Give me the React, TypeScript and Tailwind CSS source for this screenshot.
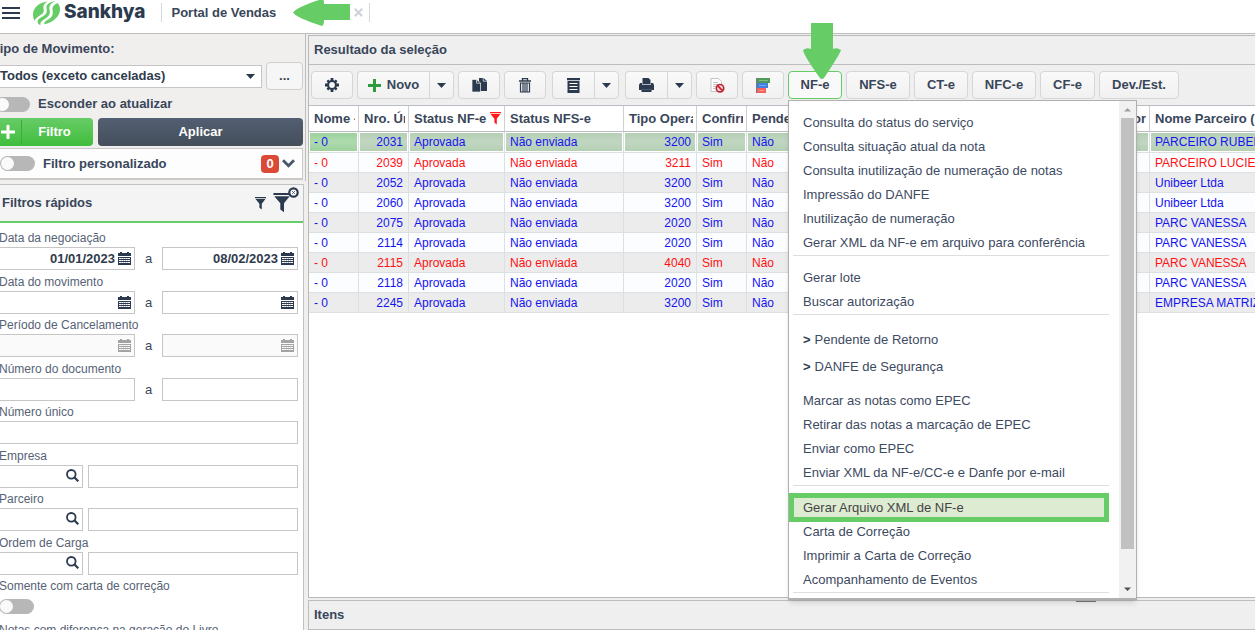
import React from "react";

const rows = [
  { n: "2031", op: "3200", p: "PARCEIRO RUBENS", sel: true },
  { n: "2039", op: "3211", p: "PARCEIRO LUCIENE", red: true },
  { n: "2052", op: "3200", p: "Unibeer Ltda" },
  { n: "2060", op: "3200", p: "Unibeer Ltda" },
  { n: "2075", op: "2020", p: "PARC VANESSA" },
  { n: "2114", op: "2020", p: "PARC VANESSA" },
  { n: "2115", op: "4040", p: "PARC VANESSA", red: true },
  { n: "2118", op: "2020", p: "PARC VANESSA" },
  { n: "2245", op: "3200", p: "EMPRESA MATRIZ" },
];

const menuGroups = [
  [
    "Consulta do status do serviço",
    "Consulta situação atual da nota",
    "Consulta inutilização de numeração de notas",
    "Impressão do DANFE",
    "Inutilização de numeração",
    "Gerar XML da NF-e em arquivo para conferência",
  ],
  ["Gerar lote", "Buscar autorização"],
];
const epecItems = [
  "Marcar as notas como EPEC",
  "Retirar das notas a marcação de EPEC",
  "Enviar como EPEC",
  "Enviar XML da NF-e/CC-e e Danfe por e-mail",
];
const eventItems = ["Carta de Correção", "Imprimir a Carta de Correção", "Acompanhamento de Eventos"];

const field = "block h-[23px] border border-[#c6c6c6] bg-white text-[#2f3b4d] outline-none";

function Caret({ className = "" }: { className?: string }) {
  return (
    <svg className={className} width="9" height="5" viewBox="0 0 9 5" aria-hidden="true">
      <path d="M0 0h9L4.5 5z" fill="#2b3a4e" />
    </svg>
  );
}

function CalendarIcon({ color }: { color: string }) {
  return (
    <svg width="13" height="13" viewBox="0 0 13 13" aria-hidden="true">
      <path d="M0 1h2V0h2v1h5V0h2v1h2v3H0zM0 5h13v8H0z" fill={color} />
      <path d="M1 6.500h11M1 8.500h11M1 10.500h11" stroke="#fff" strokeWidth="1" strokeDasharray="2 .25" />
    </svg>
  );
}

function SearchIcon() {
  return (
    <svg width="13" height="13" viewBox="0 0 13 13" fill="none" stroke="#2b3a4e" aria-hidden="true">
      <circle cx="5.300" cy="5.300" r="4.300" strokeWidth="1.800" />
      <path d="M8.300 8.300l4 4" strokeWidth="2.200" />
    </svg>
  );
}

function Funnel({ size, color }: { size: number; color: string }) {
  return (
    <svg width={size} height={size + 2} viewBox="0 0 12 14" aria-hidden="true">
      <path d="M0 0h12v1.400H0zM.6 2.200h10.800L7.400 7.200V13.500L4.800 11.500V7.200z" fill={color} />
    </svg>
  );
}

function Toggle({ id }: { id: string }) {
  return (
    <input
      id={id}
      type="checkbox"
      role="switch"
      className="relative h-[15px] w-[35px] shrink-0 appearance-none rounded-full bg-[#b7b7b7] before:absolute before:left-px before:top-px before:h-[13px] before:w-[13px] before:rounded-full before:bg-[#fafafa]"
    />
  );
}

function DateField({ label, value, disabled }: { label: string; value?: string; disabled?: boolean }) {
  return (
    <div className="relative min-w-0 flex-1">
      <input
        aria-label={label}
        defaultValue={value}
        disabled={disabled}
        className={`${field} w-full pr-[19px] text-right text-[13px] font-bold disabled:bg-[#fafafa]`}
      />
      <button aria-label={`Abrir calendário: ${label}`} disabled={disabled} className="absolute top-[5px] right-1">
        <CalendarIcon color={disabled ? "#a3a3a3" : "#2b3a4e"} />
      </button>
    </div>
  );
}

function FilterRow({ label, htmlFor, children }: { label: string; htmlFor?: string; children: React.ReactNode }) {
  return (
    <div className="shrink-0 odd:h-11 even:h-[43px]">
      <label htmlFor={htmlFor} className="block h-[17px] text-xs leading-4 whitespace-nowrap text-[#566275]">
        {label}
      </label>
      <div className="flex">{children}</div>
    </div>
  );
}

function Until() {
  return <span className="w-[27px] shrink-0 text-center text-[13px] leading-[23px] text-[#39465a]">a</span>;
}

function LookupRow({ label, id }: { label: string; id: string }) {
  return (
    <FilterRow label={label} htmlFor={id}>
      <div className="relative mr-[5px] w-[84px] shrink-0">
        <input id={id} className={`${field} w-full pr-5`} />
        <button aria-label={`Pesquisar ${label}`} className="absolute top-1 right-1">
          <SearchIcon />
        </button>
      </div>
      <input aria-label={`Descrição ${label}`} className={`${field} min-w-0 flex-1`} />
    </FilterRow>
  );
}

function Sidebar() {
  return (
    <aside className="flex w-[306px] shrink-0 flex-col overflow-hidden">
      <div className="border-r border-[#bdbdbd] pr-0.5">
        <div className="-ml-2">
          <label htmlFor="tipo" className="block pt-[7px] text-[13px] leading-4 font-bold">
            Tipo de Movimento:
          </label>
          <div className="mt-[5px] flex items-center gap-1">
            <div className="relative min-w-0 flex-1">
              <select id="tipo" className={`${field} w-full appearance-none pl-[7px] text-[13px] font-bold`}>
                <option>Todos (exceto canceladas)</option>
              </select>
              <Caret className="pointer-events-none absolute top-[9px] right-[7px]" />
            </div>
            <button className="h-7 w-[37px] rounded-sm border border-[#cfcfcf] bg-[#f6f6f6] text-[13px] leading-5 font-bold">
              ...
            </button>
          </div>
          <div className="flex h-7 items-center gap-2 pl-[3px]">
            <Toggle id="esconder" />
            <label htmlFor="esconder" className="text-[13px] font-bold">
              Esconder ao atualizar
            </label>
          </div>
          <div className="flex gap-[5px] text-[13px] font-bold text-white">
            <button className="flex h-7 w-[101px] items-center rounded-sm bg-gradient-to-b from-[#66cc66] to-[#3fbd3b]">
              <svg className="ml-[9px]" width="14" height="14" viewBox="0 0 14 14" aria-hidden="true">
                <path d="M5.500 0h3v5.500H14v3H8.500V14h-3V8.500H0v-3h5.500z" fill="#fff" />
              </svg>
              <span className="ml-1.5 h-6 flex-1 border-l border-[#40a840] pr-1.5 leading-6">Filtro</span>
            </button>
            <button className="h-7 flex-1 rounded-sm bg-gradient-to-b from-[#535f72] to-[#444e5b]">Aplicar</button>
          </div>
        </div>
        <div className="mt-0.5 mb-px flex h-8 items-center border border-b-2 border-l-0 border-[#c8c8c8] bg-[#fdfdfd] pr-[7px]">
          <Toggle id="personalizado" />
          <label htmlFor="personalizado" className="ml-2 flex-1 text-[13px] font-bold">
            Filtro personalizado
          </label>
          <span className="h-[18px] w-[18px] rounded bg-[#db4a36] text-center text-[13px] leading-[18px] font-bold text-white">
            0
          </span>
          <button aria-label="Expandir filtro personalizado" className="ml-[3px]">
            <svg width="13" height="9" viewBox="0 0 13 9" fill="none" aria-hidden="true">
              <path d="M1 1.200l5.500 5.500L12 1.200" stroke="#4a586b" strokeWidth="2.800" />
            </svg>
          </button>
        </div>
      </div>
      <div className="mt-[3px] mr-0.5 flex min-h-0 flex-1 flex-col border-t border-r border-[#c2c2c2] bg-white">
        <div className="flex h-[38px] shrink-0 items-center border-b-2 border-[#66cc66] bg-[#f4f4f4] pl-0.5">
          <h2 className="flex-1 text-[13px] font-bold">Filtros rápidos</h2>
          <button aria-label="Filtrar" className="mr-[7px]">
            <Funnel size={11} color="#2b3a4e" />
          </button>
          <button aria-label="Limpar filtros" className="relative mr-3">
            <Funnel size={18} color="#2b3a4e" />
            <svg className="absolute -top-1.5 left-[15px]" width="11" height="11" viewBox="0 0 11 11" aria-hidden="true">
              <circle cx="5.500" cy="5.500" r="4.200" fill="#fff" stroke="#2b3a4e" strokeWidth="2.200" />
              <path d="M4 4l3 3M7 4L4 7" stroke="#2b3a4e" strokeWidth=".7" />
            </svg>
          </button>
        </div>
        <div className="-ml-px flex min-h-0 flex-1 flex-col overflow-hidden pt-[7px] pr-[5px]">
          <FilterRow label="Data da negociação">
            <DateField label="Data da negociação inicial" value="01/01/2023" />
            <Until />
            <DateField label="Data da negociação final" value="08/02/2023" />
          </FilterRow>
          <FilterRow label="Data do movimento">
            <DateField label="Data do movimento inicial" />
            <Until />
            <DateField label="Data do movimento final" />
          </FilterRow>
          <FilterRow label="Período de Cancelamento">
            <DateField label="Cancelamento inicial" disabled />
            <Until />
            <DateField label="Cancelamento final" disabled />
          </FilterRow>
          <FilterRow label="Número do documento" htmlFor="doc">
            <input id="doc" className={`${field} min-w-0 flex-1`} />
            <Until />
            <input aria-label="Número do documento final" className={`${field} min-w-0 flex-1`} />
          </FilterRow>
          <FilterRow label="Número único" htmlFor="unico">
            <input id="unico" className={`${field} min-w-0 flex-1`} />
          </FilterRow>
          <LookupRow label="Empresa" id="empresa" />
          <LookupRow label="Parceiro" id="parceiro" />
          <LookupRow label="Ordem de Carga" id="ordem" />
          <FilterRow label="Somente com carta de correção" htmlFor="carta">
            <div className="flex pt-1">
              <Toggle id="carta" />
            </div>
          </FilterRow>
          <FilterRow label="Notas com diferença na geração do Livro" htmlFor="livro">
            <div className="flex pt-1">
              <Toggle id="livro" />
            </div>
          </FilterRow>
        </div>
      </div>
    </aside>
  );
}

const btn =
  "flex h-7 items-center justify-center rounded-sm border border-[#d6d6d6] bg-gradient-to-b from-[#f9f9f9] to-[#f1f1f1] text-[13px] font-bold";

function IconButton({ label, children }: { label: string; children: React.ReactNode }) {
  return (
    <button aria-label={label} className={`${btn} w-[42px]`}>
      {children}
    </button>
  );
}

function SplitButton({ label, wide, children }: { label: string; wide?: boolean; children: React.ReactNode }) {
  return (
    <div className="flex">
      <button aria-label={label} className={`${btn} rounded-r-none border-r-0 ${wide ? "w-[72px]" : "w-[42px]"}`}>
        {children}
      </button>
      <button aria-label={`Mais opções: ${label}`} className={`${btn} w-[25px] rounded-l-none`}>
        <Caret />
      </button>
    </div>
  );
}

function MenuItem({ children }: { children: React.ReactNode }) {
  return (
    <li>
      <button role="menuitem" className="block h-6 w-full pl-2.5 text-left leading-[26px] whitespace-nowrap">
        {children}
      </button>
    </li>
  );
}

function Submenu({ children }: { children: React.ReactNode }) {
  return (
    <li>
      <button role="menuitem" aria-haspopup="true" className="flex h-[27px] w-full items-center gap-1 pl-2.5">
        <b className="text-[#2b3a4e]">&gt;</b>
        {children}
      </button>
    </li>
  );
}

function NfeMenu() {
  return (
    <div className="absolute top-[29px] left-0 z-10 flex h-[500px] w-[349px] border border-b-2 border-[#b0b0b0] bg-white text-[13px] text-[#3d4a5f] shadow-md">
      <div className="min-w-0 flex-1 overflow-hidden pt-[9px] pr-2.5 pl-1">
        {menuGroups.map((g) => (
          <ul key={g[0]} role="menu" className="mb-[9px] border-b border-[#dedede] pb-px">
            {g.map((t) => (
              <MenuItem key={t}>{t}</MenuItem>
            ))}
          </ul>
        ))}
        <ul role="menu" className="pt-0.5 pb-2">
          <Submenu>Pendente de Retorno</Submenu>
          <Submenu>DANFE de Segurança</Submenu>
        </ul>
        <ul role="menu" className="mb-[9px] border-b border-[#dedede] pb-px">
          {epecItems.map((t) => (
            <MenuItem key={t}>{t}</MenuItem>
          ))}
        </ul>
        <ul role="menu" className="border-b border-[#dedede] pb-px">
          <li className="relative">
            <button role="menuitem" className="block h-6 w-full bg-[#dcebd1] pl-2.5 text-left leading-[26px] text-[#444]">
              Gerar Arquivo XML de NF-e
            </button>
            <span className="pointer-events-none absolute -top-0.5 right-0 -bottom-[3px] -left-1 border-5 border-[#66cc66]" />
          </li>
          {eventItems.map((t) => (
            <MenuItem key={t}>{t}</MenuItem>
          ))}
        </ul>
      </div>
      <div className="flex w-[17px] flex-col items-center bg-[#f1f1f1]">
        <svg width="17" height="17" viewBox="0 0 17 17" aria-hidden="true">
          <path d="M5 10.500h7L8.500 7z" fill="#a0a0a0" />
        </svg>
        <div className="w-[13px] flex-1 bg-[#c1c1c1]" />
        <div className="h-8" />
        <svg width="17" height="17" viewBox="0 0 17 17" aria-hidden="true">
          <path d="M5 6.500h7L8.500 10z" fill="#505050" />
        </svg>
      </div>
    </div>
  );
}

function Toolbar() {
  return (
    <div className="flex h-10 shrink-0 items-center gap-1.5 pl-0.5">
      <div className="flex gap-1">
        <IconButton label="Configurações">
          <svg width="14" height="14" viewBox="0 0 14 14" aria-hidden="true">
            <g fill="#2b3a4e">
              <path d="M5.600 0h2.800v14H5.600zM0 5.600h14v2.800H0z" />
              <path d="M1.500 3.200l1.700-1.700 9.300 9.300-1.700 1.700zM10.800 1.500l1.700 1.700-9.300 9.300-1.700-1.700z" />
              <circle cx="7" cy="7" r="5" />
            </g>
            <circle cx="7" cy="7" r="2.900" fill="#f5f5f5" />
          </svg>
        </IconButton>
        <SplitButton label="Novo" wide>
          <svg className="mr-1.5" width="13" height="13" viewBox="0 0 13 13" aria-hidden="true">
            <path d="M5 0h3v5h5v3H8v5H5V8H0V5h5z" fill="#2e9b3e" />
          </svg>
          <span>Novo</span>
        </SplitButton>
        <IconButton label="Duplicar">
          <svg width="15" height="14" viewBox="0 0 15 14" aria-hidden="true">
            <path d="M7 0h4.500L15 3v10H7z" fill="#2b3a4e" />
            <path d="M0 1.500h4.500L8.500 5v9H0z" fill="#2b3a4e" stroke="#f5f5f5" strokeWidth=".7" />
            <path d="M4.500 1.500V5.200H8.500M11.200 0v3.200H15" fill="none" stroke="#f5f5f5" strokeWidth=".7" />
          </svg>
        </IconButton>
        <IconButton label="Excluir">
          <svg width="12" height="15" viewBox="0 0 12 15" fill="none" stroke="#2b3a4e" aria-hidden="true">
            <path d="M3.500 2.500v-2h5v2M0 3h12" strokeWidth="1.400" />
            <path d="M1.500 5h9v9h-9zM4 5v9M6 5v9M8 5v9" strokeWidth="1.200" />
          </svg>
        </IconButton>
      </div>
      <SplitButton label="Listagem">
        <svg width="13" height="15" viewBox="0 0 13 15" aria-hidden="true">
          <path d="M0 0h13v2.200H0zM.5 3h12v12H.5z" fill="#2b3a4e" />
          <path d="M2.500 5.500h8M2.500 8.500h8M2.500 11.500h8" stroke="#fff" strokeWidth="1" />
        </svg>
      </SplitButton>
      <div className="flex gap-1">
        <SplitButton label="Imprimir">
          <svg width="15" height="14" viewBox="0 0 15 14" aria-hidden="true">
            <path d="M3.500 0h6L11.500 2v4h-8z" fill="#2b3a4e" />
            <path d="M1 5h2v2h9V5h2l1 2v5h-2.500v2h-10v-2H0V7z" fill="#2b3a4e" />
            <path d="M3 6.500h9M2.500 11.500h10" stroke="#69768a" strokeWidth=".5" />
          </svg>
        </SplitButton>
        <IconButton label="Cancelar nota">
          <svg width="15" height="15" viewBox="0 0 15 15" fill="none" aria-hidden="true">
            <path d="M1 .5h7.500L11.500 3.500v10H1z" fill="#fff" stroke="#c4c4c4" />
            <path d="M3 4.500h5M3 6.500h6M3 8.500h3M3 10.500h2" stroke="#c4c4c4" />
            <circle cx="10" cy="10.200" r="3.700" fill="#f4dede" stroke="#c22630" strokeWidth="1.700" />
            <path d="M7.500 7.700l5 5" stroke="#c22630" strokeWidth="1.700" />
          </svg>
        </IconButton>
        <IconButton label="Legenda">
          <svg width="14" height="15" viewBox="0 0 14 15" aria-hidden="true">
            <path d="M1 0h13v5H1z" fill="#4e9a58" />
            <path d="M1 5h11v5H1z" fill="#3f7fe0" />
            <path d="M1 10h9v5H1z" fill="#f8605c" />
            <path d="M3 2.500h9" stroke="#86bd8c" />
            <path d="M3 7.500h7" stroke="#7ba9f0" />
            <path d="M3 12.500h5" stroke="#fb9a96" />
            <path d="M.5 0v15" stroke="#777" />
          </svg>
        </IconButton>
        <div className="relative">
          <button
            aria-haspopup="menu"
            aria-expanded="true"
            className="h-7 w-[54px] rounded-sm border border-[#66cc66] bg-[#f9f9f9] text-[13px] font-bold"
          >
            NF-e
          </button>
          <NfeMenu />
          <svg
            className="pointer-events-none absolute -top-12 left-[15px] z-20"
            width="38"
            height="56"
            viewBox="0 0 38 56"
            aria-hidden="true"
          >
            <path d="M8 0h22v26q4-2 8 1-1 4-17 28-2 2-4 0Q1 33 0 27q4-3 8-1z" fill="#66cc66" />
          </svg>
        </div>
        <button className={`${btn} w-16`}>NFS-e</button>
        <button className={`${btn} w-[54px]`}>CT-e</button>
        <button className={`${btn} w-16`}>NFC-e</button>
        <button className={`${btn} w-[55px]`}>CF-e</button>
        <button className={`${btn} w-20`}>Dev./Est.</button>
      </div>
    </div>
  );
}

function Th({ children, right }: { children: React.ReactNode; right?: boolean }) {
  return (
    <th className={`overflow-hidden border-r border-[#cfcfcf] px-[3px] ${right ? "text-right" : "text-left"}`}>
      <div className="overflow-hidden pl-0.5 whitespace-nowrap">{children}</div>
    </th>
  );
}

function Grid() {
  return (
    <div className="min-h-0 flex-1 overflow-hidden border-t border-[#b9bec4] bg-white">
      <table className="w-full min-w-[1041px] table-fixed border-separate border-spacing-0 text-xs">
        <colgroup>
          <col className="w-[50px]" />
          <col className="w-[50px]" />
          <col className="w-24" />
          <col className="w-[119px]" />
          <col className="w-[73px]" />
          <col className="w-[50px]" />
          <col className="w-[50px]" />
          <col className="w-[353px]" />
          <col className="w-[200px]" />
        </colgroup>
        <thead>
          <tr className="h-[26px] text-[13px] [&>th]:border-b [&>th]:border-b-[#b9bec4]">
            <Th>Nome - Empresa</Th>
            <Th>Nro. Único</Th>
            <Th>
              <span className="flex items-center justify-between">
                Status NF-e
                <Funnel size={11} color="#ff1a1a" />
              </span>
            </Th>
            <Th>Status NFS-e</Th>
            <Th>Tipo Operação</Th>
            <Th>Confirmada</Th>
            <Th>Pendente</Th>
            <Th right>Valor</Th>
            <Th>Nome Parceiro (Parceiro)</Th>
          </tr>
        </thead>
        <tbody>
          {rows.map((r, i) => (
            <tr
              key={r.n}
              className={`[&>td]:overflow-hidden [&>td]:border-r [&>td]:border-b [&>td]:border-[#dde0e2] [&>td]:px-[5px] [&>td]:whitespace-nowrap ${
                r.sel
                  ? "h-[21px] [&>td]:bg-gradient-to-b [&>td]:from-[#b3cfb3] [&>td]:via-[#c1d6c1] [&>td]:to-[#b3cfb3] [&>td]:shadow-[inset_0_0_0_1px_#fff] [&>td:first-child]:from-[#9bd19b] [&>td:first-child]:via-[#aedaae] [&>td:first-child]:to-[#9bd19b]"
                  : "h-5"
              } ${i % 2 ? "bg-[#fbfdff]" : "bg-[#ececec]"} ${r.red ? "text-[#ff1111]" : "text-[#1414f0]"}`}
            >
              <td>- 0</td>
              <td className="text-right">{r.n}</td>
              <td>Aprovada</td>
              <td>Não enviada</td>
              <td className="text-right">{r.op}</td>
              <td>Sim</td>
              <td>Não</td>
              <td />
              <td>{r.p}</td>
            </tr>
          ))}
        </tbody>
      </table>
    </div>
  );
}

export default function App() {
  return (
    <div className="flex h-screen flex-col overflow-hidden bg-white font-['Liberation_Sans',Arial,sans-serif] text-[#39465a]">
      <header className="flex h-[34px] shrink-0 items-start border-b border-[#bdbdbd] pt-[3px]">
        <button aria-label="Abrir menu" className="mt-1 ml-0.5 flex flex-col gap-[3px]">
          <span className="h-0.5 w-[18px] bg-[#2b3a4e]" />
          <span className="h-0.5 w-[18px] bg-[#2b3a4e]" />
          <span className="h-0.5 w-[18px] bg-[#2b3a4e]" />
        </button>
        <svg className="-mt-0.5 ml-[13px] shrink-0" width="27" height="24" viewBox="0 0 27 24" aria-hidden="true">
          <g fill="#66cc66">
            <path d="M15 .5C7 1 0 6 0 13.500c0 2.500.5 4.500 1.500 6C3 17 5 15.500 7.500 14c3-1.800 3.800-3.500 3-6.500C9.800 4.500 11.500 2 15 .5z" />
            <path d="M22 0c-5.500 1-9 3.500-8.500 7 .5 3.200.7 5.500-3 8C7 17.300 3.500 18 5 22.500c.6.800 1.500 1.200 2.500 1.500-.5-3 1.500-4.300 5-6.500 4-2.500 5-5 4-9C15.800 5 17.500 2.500 22 0z" />
            <path d="M24.500 2C20.500 4 19 6 19.600 9.200c.8 4.300-.5 7-4.400 9.300-2.600 1.500-4 2.500-4 4.800C20 21.500 27 15.500 27 8.500c0-2.700-.8-5-2.500-6.500z" />
          </g>
        </svg>
        <span className="ml-1 font-['Inter',sans-serif] text-[19px] leading-[18px] font-extrabold text-[#2b3a4e]">
          Sankhya
        </span>
        <nav className="ml-4 flex h-[19px] items-center border-x border-[#d5dae0] pr-1.5 pl-[9px]">
          <a href="#portal" className="text-[13px] font-bold">
            Portal de Vendas
          </a>
          <svg className="mr-1 ml-[17px]" width="57" height="27" viewBox="0 0 57 27" aria-hidden="true">
            <path d="M0 13.500Q4 8 29 0q2 0 2 5h26v16H31q0 5-2 6Q4 19 0 13.500z" fill="#66cc66" />
          </svg>
          <button aria-label="Fechar aba">
            <svg width="9" height="9" viewBox="0 0 9 9" aria-hidden="true">
              <path d="M.8.8l7.400 7.400M8.200.8L.8 8.200" stroke="#cdd2d8" strokeWidth="2" />
            </svg>
          </button>
        </nav>
      </header>
      <div className="flex min-h-0 flex-1 bg-[#f1efee]">
        <Sidebar />
        <main className="ml-0.5 flex min-w-0 flex-1 flex-col pt-px">
          <section className="flex min-h-0 flex-1 flex-col border border-r-0 border-[#b9b9b9] bg-[#efefef]">
            <h1 className="h-[29px] shrink-0 border-b border-[#bdbdbd] pl-[5px] text-[13px] leading-7 font-bold">
              Resultado da seleção
            </h1>
            <Toolbar />
            <Grid />
          </section>
          <section className="mt-0.5 h-[30px] shrink-0 border border-r-0 border-[#bdbdbd] bg-[#efefef]">
            <div className="flex justify-between">
              <h2 className="pl-[5px] text-[13px] leading-7 font-bold">Itens</h2>
              <span className="mr-[159px] h-px w-5 bg-[#777]" />
            </div>
          </section>
        </main>
      </div>
    </div>
  );
}
